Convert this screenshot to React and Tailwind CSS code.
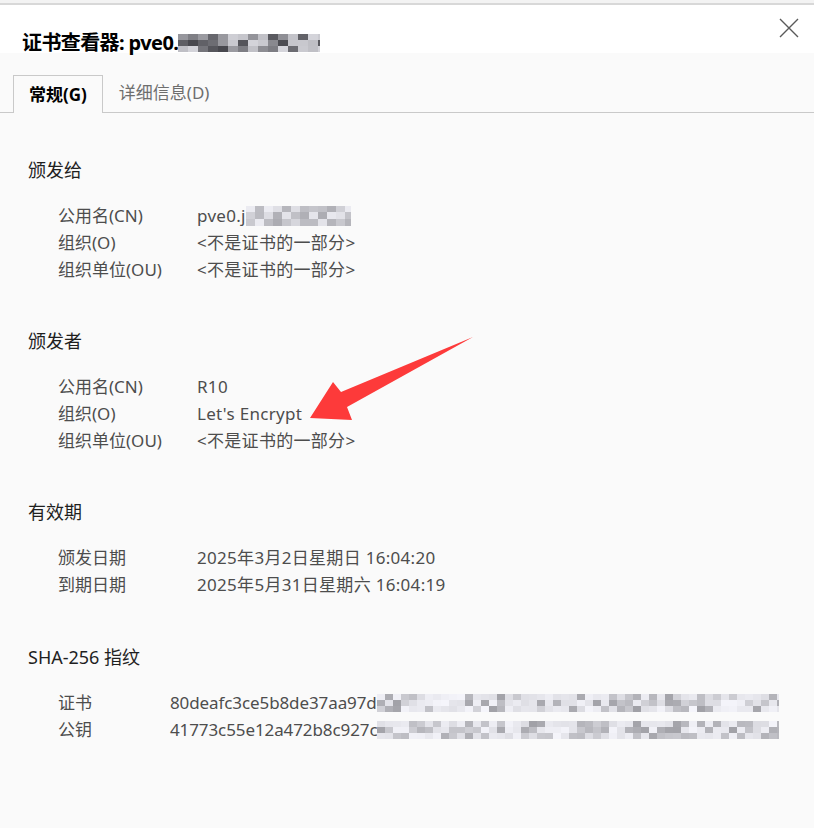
import { useMemo } from "react";

// pseudo-random pixel block that stands in for the redacted text
function Pixelated({ width, height, cell = 9, rows = 3, dark = 90, light = 225, seed = 1, density = 0.5 }) {
  const cells = useMemo(() => {
    let s = seed * 9301 + 49297;
    const rnd = () => {
      s = (s * 9301 + 49297) % 233280;
      return s / 233280;
    };
    const cols = Math.ceil(width / cell);
    const out = [];
    for (let r = 0; r < rows; r++) {
      const row = [];
      for (let c = 0; c < cols; c++) {
        const v = rnd() < density ? dark + rnd() * (light - dark) * 0.6 : light - rnd() * 25;
        const g = Math.round(v);
        row.push(`rgb(${g},${g},${Math.min(255, g + 6)})`);
      }
      out.push(row);
    }
    return out;
  }, [width, cell, rows, dark, light, seed, density]);

  return (
    <span className="inline-flex flex-col overflow-hidden align-middle blur-[0.6px]" style={{ width, height }}>
      {cells.map((row, i) => (
        <span key={i} className="flex flex-1">
          {row.map((c, j) => (
            <span key={j} className="shrink-0" style={{ width: cell, background: c }} />
          ))}
        </span>
      ))}
    </span>
  );
}

function Row({ label, children, labelWidth = "w-[139px]", tight = false }) {
  return (
    <div className="flex h-[27px] items-center">
      <div className={labelWidth + " shrink-0"}>{label}</div>
      <div className={"flex items-center whitespace-nowrap " + (tight ? "tracking-[-0.1px]" : "tracking-[0.3px]")}>
        {children}
      </div>
    </div>
  );
}

function Section({ title, children, className = "" }) {
  return (
    <section className={className}>
      <h2 className="h-[27px] leading-[27px] text-[18px] text-[#1f1f1f]">{title}</h2>
      <div className="mt-[18px] pl-[30px] text-[#4d4d4d]">{children}</div>
    </section>
  );
}

const NOT_PART = "<不是证书的一部分>";

export default function App() {
  return (
    <div className="relative w-[814px] h-[828px] overflow-hidden bg-[#fafafa] font-['Noto_Sans','Noto_Sans_CJK_SC',sans-serif] text-[17px]">
      <div className="h-[5px] bg-[#f3f3f3] border-b-[2px] border-[#d8d8d8]" />

      <div className="h-[48px] bg-white flex items-end pl-[22px] pr-[14px] relative">
        <h1 className="font-bold text-[20px] leading-[28px] text-black tracking-[-0.6px] flex items-center -mb-[4px]">
          证书查看器: pve0.
          <Pixelated width={142} height={18} cell={10} rows={3} dark={70} light={215} seed={3} density={0.6} />
        </h1>
        <button type="button" className="absolute right-[14px] top-[12px] w-[22px] h-[22px] flex items-center justify-center">
          <svg width="20" height="20" viewBox="0 0 20 20">
            <path d="M1 1 L19 19 M19 1 L1 19" stroke="#5a5a5a" strokeWidth="1.4" fill="none" />
          </svg>
        </button>
      </div>

      <div className="flex items-end h-[60px] border-b border-[#c9c9c9] pl-[13px]">
        <div className="h-[38px] px-[15px] border border-b-0 border-[#c9c9c9] bg-[#fafafa] -mb-px flex items-center font-bold text-black">
          常规(G)
        </div>
        <div className="h-[38px] px-[16px] flex items-center text-[#6e6e6e]">详细信息(D)</div>
      </div>

      <div className="pt-[44px] pl-[28px] flex flex-col gap-[45px]">
        <Section title="颁发给">
          <Row label="公用名(CN)">
            pve0.j
            <Pixelated width={105} height={20} cell={9} rows={3} dark={170} light={238} seed={7} density={0.5} />
          </Row>
          <Row label="组织(O)">{NOT_PART}</Row>
          <Row label="组织单位(OU)">{NOT_PART}</Row>
        </Section>

        <Section title="颁发者">
          <Row label="公用名(CN)">R10</Row>
          <Row label="组织(O)">Let's Encrypt</Row>
          <Row label="组织单位(OU)">{NOT_PART}</Row>
        </Section>

        <Section title="有效期">
          <Row label="颁发日期">2025年3月2日星期日 16:04:20</Row>
          <Row label="到期日期">2025年5月31日星期六 16:04:19</Row>
        </Section>

        <Section title="SHA-256 指纹" className="mt-[1px]">
          <Row label="证书" labelWidth="w-[112px]" tight>
            80deafc3ce5b8de37aa97d
            <Pixelated width={402} height={18} cell={8} rows={3} dark={160} light={245} seed={11} density={0.35} />
          </Row>
          <Row label="公钥" labelWidth="w-[112px]" tight>
            41773c55e12a472b8c927c
            <Pixelated width={402} height={18} cell={8} rows={3} dark={160} light={245} seed={23} density={0.4} />
          </Row>
        </Section>
      </div>

      <svg className="absolute left-0 top-0 pointer-events-none" width="814" height="828">
        <polygon
          points="473,337 341,392 333,382 310,418 352,420 347,407"
          fill="#fd3a3a"
        />
      </svg>
    </div>
  );
}
